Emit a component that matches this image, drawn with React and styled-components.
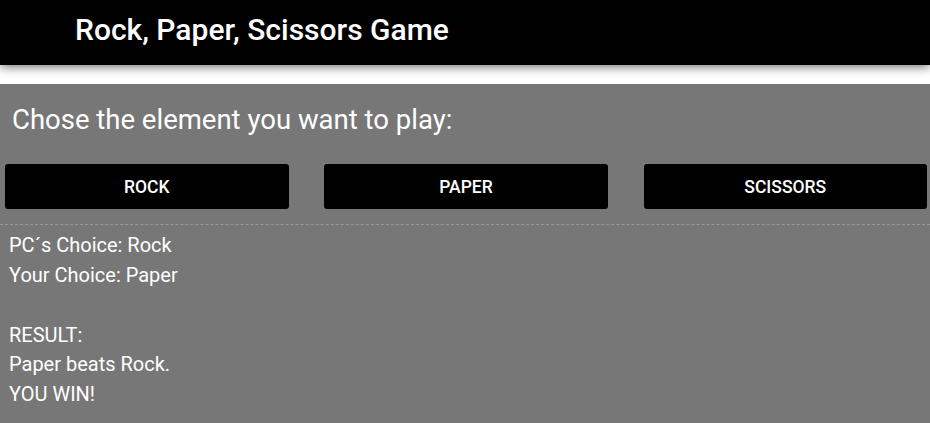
import React from "react";
import styled, { createGlobalStyle } from "styled-components";

const Global = createGlobalStyle`
  html, body { margin: 0; padding: 0; background: #fff; }
  body { font-family: Roboto, "Liberation Sans", sans-serif; }
`;

const Header = styled.header`
  height: 65px;
  background: #000;
  box-shadow: 0 2px 10px rgba(0, 0, 0, 0.55);
  position: relative;
  z-index: 1;
`;

const Title = styled.h1`
  margin: 0;
  padding-left: 75px;
  color: #fff;
  font-size: 30px;
  font-weight: 500;
  line-height: 60px;
`;

const Main = styled.main`
  margin-top: 19px;
  background: #777;
  min-height: calc(100vh - 84px);
  padding-top: 19.5px;
  color: #fff;
`;

const Prompt = styled.h2`
  margin: 0;
  padding-left: 12px;
  font-size: 27.5px;
  font-weight: 400;
  line-height: 32.2px;
`;

const ButtonRow = styled.div`
  display: flex;
  justify-content: space-between;
  padding: 0 3px 0 5px;
  margin-top: 28.3px;
  padding-bottom: 15px;
  border-bottom: 1px dashed #999;
`;

const ChoiceButton = styled.button`
  width: 283.5px;
  height: 45px;
  background: #000;
  color: #fff;
  border: none;
  border-radius: 3px;
  font-family: Roboto, "Liberation Sans", sans-serif;
  font-size: 17.5px;
  font-weight: 500;
  text-transform: uppercase;
  cursor: pointer;
  padding: 0;
`;

const Results = styled.div`
  padding: 6px 9px 0;
  font-size: 20px;
  line-height: 29.86px;
`;

const Line = styled.div`
  min-height: 29.86px;
`;

export default function App() {
  const choices = ["Rock", "Paper", "Scissors"];
  const lines = [
    "PC´s Choice: Rock",
    "Your Choice: Paper",
    "",
    "RESULT:",
    "Paper beats Rock.",
    "YOU WIN!",
  ];
  return (
    <>
      <Global />
      <Header>
        <Title>Rock, Paper, Scissors Game</Title>
      </Header>
      <Main>
        <Prompt>Chose the element you want to play:</Prompt>
        <ButtonRow>
          {choices.map((c) => (
            <ChoiceButton key={c}>{c}</ChoiceButton>
          ))}
        </ButtonRow>
        <Results>
          {lines.map((l, i) => (
            <Line key={i}>{l}</Line>
          ))}
        </Results>
      </Main>
    </>
  );
}
